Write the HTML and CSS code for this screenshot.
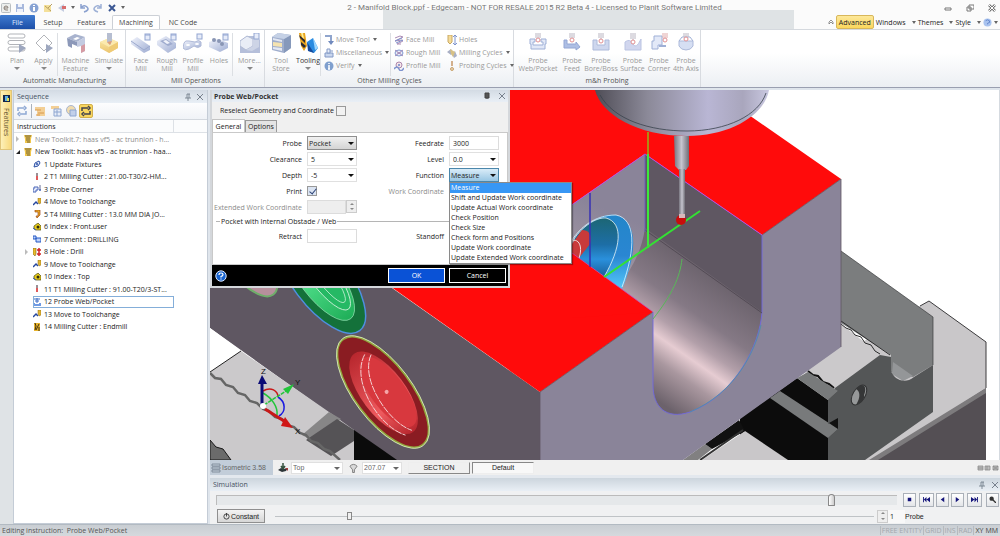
FILE: index.html
```html
<!DOCTYPE html>
<html lang="en">
<head>
<meta charset="utf-8">
<title>2 - Manifold Block.ppf - Edgecam</title>
<link rel="stylesheet" href="styles.css">
</head>
<body>
<svg class="sprite" aria-hidden="true">
  <defs>
    <linearGradient id="gSteel" x1="0" y1="0" x2="1" y2="1"><stop offset="0" stop-color="#eef1fb"/><stop offset="1" stop-color="#8e9fcb"/></linearGradient>
    <linearGradient id="gGold" x1="0" y1="0" x2="0" y2="1"><stop offset="0" stop-color="#fbeaa0"/><stop offset="1" stop-color="#e9ba55"/></linearGradient>
  </defs>
  <symbol id="i-plan" viewBox="0 0 20 20"><g fill="#fff" stroke="#a5a8ad"><rect x="1" y="1" width="17" height="4" rx="2"/><rect x="1" y="7.500" width="17" height="4" rx="2"/><rect x="1" y="14" width="17" height="4" rx="2"/></g><path d="M12 11l7 4-7 5z" fill="#8d98b5"/></symbol>
  <symbol id="i-apply" viewBox="0 0 20 20"><path d="M10 2l8 8-8 8-8-8z" fill="#fff" stroke="#a5a8ad"/><path d="M12 11l7 4-7 5z" fill="#8d98b5"/></symbol>
  <symbol id="i-machfeat" viewBox="0 0 20 20"><path d="M1 5l8-4 10 3-8 5z" fill="#9aa6c6"/><path d="M1 5l10 4v4L6 11v4l-4-2z" fill="#7887ad"/><path d="M11 9l8-5v14l-4 2v-7l-4 1z" fill="#b9c2dc"/><path d="M15 13l4-2v7l-4 2z" fill="#cf8a94"/><path d="M7 6l4-2 3 1-4 2z" fill="#fff"/></symbol>
  <symbol id="i-simulate" viewBox="0 0 20 20"><path d="M1 9l9-4 9 4v6l-9 5-9-5z" fill="url(#gGold)"/><path d="M1 9l9 5 9-5-9-4z" fill="#fbe6a0"/><path d="M10 14v6l9-5V9z" fill="#edc35d"/><path d="M8 0h5v8l-2 4-3-3z" fill="#aab3ca"/><path d="M8 9l3 3 2-4z" fill="#d98e60"/></symbol>
  <symbol id="i-face" viewBox="0 0 20 20"><path d="M0 8l6-4 13 9v4l-6 3L0 11z" fill="url(#gSteel)"/><path d="M0 8l13 9 6-4" fill="none" stroke="#8a9ac5"/><rect x="14" y="1" width="5" height="6" fill="#e3e9f8" stroke="#8197c9"/><path d="M14 2h5" stroke="#8197c9"/></symbol>
  <symbol id="i-rough" viewBox="0 0 20 20"><path d="M0 8l9-5 10 7v5l-8 5L0 12z" fill="url(#gSteel)"/><path d="M3 8l6-2 7 5-5 2z" fill="#8e9dc6"/><path d="M6 8l3-1 4 3-3 1z" fill="#eef1fb"/><rect x="14" y="1" width="5" height="6" fill="#e3e9f8" stroke="#8197c9"/><path d="M14 2h5" stroke="#8197c9"/></symbol>
  <symbol id="i-profile" viewBox="0 0 20 20"><path d="M1 10q1-3 5-2l6 1q4-3 6 0v4q-3 3-7 0l-5 3q-4 2-6-1z" fill="url(#gSteel)" stroke="#a3afd2"/><ellipse cx="5" cy="12" rx="2" ry="1" fill="#fff"/><ellipse cx="14" cy="11" rx="2" ry="1" fill="#fff"/><rect x="14" y="1" width="5" height="5" fill="#e3e9f8" stroke="#8197c9"/></symbol>
  <symbol id="i-holes" viewBox="0 0 20 20"><path d="M0 9l9-3 10 4v5l-8 4-11-5z" fill="url(#gSteel)"/><g fill="#7584a8"><circle cx="5" cy="7" r="2"/><circle cx="10" cy="8" r="2"/><circle cx="13" cy="11" r="2"/></g><rect x="14" y="1" width="5" height="6" fill="#e3e9f8" stroke="#8197c9"/><path d="M14 2h5" stroke="#8197c9"/></symbol>
  <symbol id="i-more" viewBox="0 0 20 20"><path d="M0 8l7-5h10l3 4v13H0z" fill="#a9b5d4"/><path d="M0 8l7-5 6 3v7l-7 4-6-4z" fill="#e6eaf5" stroke="#a4afcd"/><path d="M13 6h6v8l-7 4-6-1 7-4z" fill="#c5cde2"/><rect x="14" y="0" width="5" height="6" fill="#e3e9f8" stroke="#8197c9"/></symbol>
  <symbol id="i-store" viewBox="0 0 20 20"><path d="M1 4l6-4 13 2v13l-7 5-12-3z" fill="#8fa0c4"/><path d="M13 6l7-4v13l-7 5z" fill="#7288b0"/><path d="M1 4l12 2 7-4-13-2z" fill="#bccae2"/><path d="M2 9l9 1v4l-9-1z" fill="#f3dfa4"/><path d="M2 14l9 1v3l-9-2z" fill="#dfe5f2"/><path d="M2 5l9 2v2l-9-2z" fill="#dfe5f2"/></symbol>
  <symbol id="i-tooling" viewBox="0 0 20 20"><path d="M1 0h6l2 13-3 5-3-5z" fill="#e9a41c"/><path d="M1 2l6 5v3L2 5zM3 9l5 4-2 2-3-3z" fill="#2c2b33"/><path d="M3 0h2l1 6-2-2z" fill="#fff09b"/><path d="M9 9l6-4 5 10-4 5-5-2z" fill="#2a8be0"/><path d="M9 9l7 11-6-2z" fill="#174a9a"/><path d="M15 5l5 10-3 2z" fill="#9fd7ff"/></symbol>
  <symbol id="i-movetool" viewBox="0 0 10 10"><path d="M1 1h6v6" fill="none" stroke="#90a5cd" stroke-width="2"/><path d="M4 6h6l-3 4z" fill="#7089bd"/></symbol>
  <symbol id="i-misc" viewBox="0 0 10 10"><path d="M1 5h8v4H1z" fill="#c9d6ed" stroke="#8299c6"/><path d="M3 1h3v4H3zM6 3h3" fill="#e7edf8" stroke="#8299c6"/></symbol>
  <symbol id="i-info" viewBox="0 0 10 10"><circle cx="5" cy="5" r="4.500" fill="#7f9fce"/><path d="M5 2v1M5 4v4M4 8h2" stroke="#fff" stroke-width="1.500"/></symbol>
  <symbol id="i-fm" viewBox="0 0 10 10"><path d="M1 3l5-2 3 1-6 3-2 1 7-1 1 1-6 3h4" fill="none" stroke="#ac8cb4"/><path d="M1 6l7-3M2 8l7-3" stroke="#7e93ce"/></symbol>
  <symbol id="i-rm" viewBox="0 0 10 10"><ellipse cx="5" cy="5" rx="4" ry="3" fill="#e9eefa" stroke="#8298cf"/><path d="M1 2l8 6M1 8l8-6M3 5h4" stroke="#a78db8"/></symbol>
  <symbol id="i-pm" viewBox="0 0 10 10"><circle cx="5" cy="4" r="3" fill="#f5e5ea" stroke="#ad88ac"/><path d="M0 8q3-4 5 0t5-1" fill="none" stroke="#7e93ce" stroke-width="1.500"/><circle cx="5" cy="4" r="1" fill="#6d85c6"/></symbol>
  <symbol id="i-hl" viewBox="0 0 10 10"><path d="M1 0h4v7L3 9 1 7z" fill="#f5dc9a" stroke="#c9a862"/><path d="M8 0v10M6 2l2-2 2 2M6 8l2 2 2-2" fill="none" stroke="#7f94cc"/></symbol>
  <symbol id="i-mc" viewBox="0 0 10 10"><path d="M0 4l4-3 2 3-2 3zM5 6l3-3 2 5-3 2z" fill="#a9b0c5"/><path d="M3 1l5 3-2 5-2-3z" fill="#d8c184"/></symbol>
  <symbol id="i-pc" viewBox="0 0 10 10"><path d="M4 0h2v5H4z" fill="#d3b08d"/><circle cx="5" cy="8" r="1.500" fill="#e6d0b2" stroke="#c9a46f"/></symbol>
  <symbol id="i-pweb" viewBox="0 0 18 18"><path d="M1 6h5v3H4v3h10V9h-2V6h5v5h-1v5H2v-5H1z" fill="#dde5f6" stroke="#8fa3d0"/><path d="M9 0v6M7 0v5M11 0v5" stroke="#b0aab8"/><circle cx="9" cy="7" r="2" fill="#fff" stroke="#dc7c80"/></symbol>
  <symbol id="i-pfeed" viewBox="0 0 18 18"><path d="M1 7h3v4h9V9l4 5-4 3v-2H1z" fill="#9fb3e0" stroke="#8298ce"/><path d="M9 0v6M7 0v5M11 0v5" stroke="#b0aab8"/><circle cx="9" cy="7" r="2" fill="#fff" stroke="#dc7c80"/></symbol>
  <symbol id="i-pbore" viewBox="0 0 18 18"><path d="M1 7h4v5h8V7h4v10H1z" fill="#c6d1ec" stroke="#a0afd4"/><path d="M9 0v7M7 0v5M11 0v5" stroke="#b0aab8"/><circle cx="9" cy="8" r="2" fill="#fff" stroke="#dc7c80"/></symbol>
  <symbol id="i-psurf" viewBox="0 0 18 18"><path d="M1 9q5-4 8 2t8-5v11H1z" fill="#c9d0ec" stroke="#b0bade"/><path d="M9 0v8M7 0v6M11 0v6" stroke="#b0aab8"/><circle cx="9" cy="9" r="2" fill="#fff" stroke="#dc7c80"/></symbol>
  <symbol id="i-pcorner" viewBox="0 0 18 18"><path d="M4 3h8v9H8v4H2V8h2z" fill="#dfe6f7" stroke="#8fa3d0"/><path d="M15 0v8M13 0v5M17 0v5" stroke="#dc9c9c"/><circle cx="15" cy="7" r="2" fill="#fff" stroke="#dc7c80"/><path d="M9 13h7" stroke="#8fa3d0" stroke-width="2"/></symbol>
  <symbol id="i-paxis" viewBox="0 0 18 18"><path d="M2 8h14v5q-2 4-7 4t-7-4z" fill="#cfdaf2" stroke="#a0afd4"/><path d="M2 8l3-4h8l3 4" fill="none" stroke="#8fa3d0"/><path d="M9 0v5M7 0v4M11 0v4" stroke="#b0aab8"/><circle cx="9" cy="6" r="2" fill="#fff" stroke="#dc7c80"/></symbol>
  <symbol id="i-refresh" viewBox="0 0 12 12"><path d="M2 6V3h6M8 1l2 2-2 2M10 6v3H4M4 7L2 9l2 2" fill="none" stroke="currentColor" stroke-width="1.500"/></symbol>
  <symbol id="i-kit" viewBox="0 0 8 8"><path d="M0 0h8l-1 4v4H1V4z" fill="#f0c64c"/><path d="M1 1h6M2 3h4M2 5h4M3 7h3" stroke="#4e4630" stroke-width=".8"/></symbol>
  <symbol id="i-fix" viewBox="0 0 8 8"><path d="M1 7l1-4 4-2 1 2-2 3z" fill="#dfe7fa" stroke="#2d51a5"/><circle cx="4" cy="4" r="1" fill="#2d51a5"/></symbol>
  <symbol id="i-cut" viewBox="0 0 8 8"><path d="M4 0v4" stroke="#7a6a72" stroke-width="1.500"/><path d="M4 3v4" stroke="#e05a5a" stroke-width="2"/></symbol>
  <symbol id="i-corner" viewBox="0 0 8 8"><path d="M1 2h4v3H3v2H0V4h1z" fill="#e4eafb" stroke="#4a67b8"/><path d="M7 0v5" stroke="#666c96"/><circle cx="7" cy="5" r="1" fill="#4a67b8"/></symbol>
  <symbol id="i-move" viewBox="0 0 8 8"><path d="M0 7l3-3 2 2" fill="none" stroke="#26479e" stroke-width="1.500"/><path d="M5 0h3v5L6 6 5 4z" fill="#e4b531" stroke="#8a6a1a" stroke-width=".5"/></symbol>
  <symbol id="i-t4" viewBox="0 0 8 8"><path d="M2 0h5v5L4 8 3 6h2V2H2z" fill="#e8ad26" stroke="#a24a1b" stroke-width=".7"/></symbol>
  <symbol id="i-index" viewBox="0 0 8 8"><path d="M1 6V3l4-3 3 3v4H3z" fill="#e7cb1b" stroke="#4c470f" stroke-width=".7"/><circle cx="5" cy="4" r="1.500" fill="#2f2c0e"/><path d="M0 5l3 2" stroke="#375bb0"/></symbol>
  <symbol id="i-comment" viewBox="0 0 8 8"><path d="M0 1h3v3H0zM3 3h5v4H3z" fill="#bcd2fa" stroke="#2459c4"/></symbol>
  <symbol id="i-drill" viewBox="0 0 8 8"><path d="M0 0h3v6L2 8 0 6z" fill="#e8bd2c" stroke="#80611a" stroke-width=".6"/><path d="M6 0v8M4 2h4M4 6h4" stroke="#cf2326" stroke-width="1.500"/></symbol>
  <symbol id="i-probe" viewBox="0 0 8 8"><path d="M0 5h2v1h4V5h2v3H0z" fill="#6f9be4"/><path d="M1 1h6M4 0v5M2 3h4" stroke="#3d6cc5"/></symbol>
  <symbol id="i-end" viewBox="0 0 8 8"><path d="M1 0h6v8H1z" fill="#e8b42d"/><path d="M2 0l1 3-1 4M6 1L3 7M6 4v4" stroke="#3f3012" fill="none"/></symbol>
  <symbol id="i-pin" viewBox="0 0 8 8"><path d="M3 1v4M5 1v4M3 1h3M1 5h6M4 5v3" fill="none" stroke="#6b7684" stroke-width=".8"/></symbol>
  <symbol id="i-x" viewBox="0 0 8 8"><path d="M1 1l6 6M7 1L1 7" stroke="currentColor"/></symbol>
</svg>

<div class="app">
  <header class="top">
    <div class="titlebar">
      <div class="quick">
        <svg class="q-logo" viewBox="0 0 10 10"><rect x=".5" y=".5" width="9" height="9" rx="1" fill="#eceeed" stroke="#b9bec1"/><path d="M3 5h4q0-2-2-2T3 5t2 2h2" fill="none" stroke="#8a8078"/></svg>
        <svg viewBox="0 0 10 10"><path d="M1 1h8v8H1z" fill="#a7b8dc"/><path d="M3 1h4v3H3zM2 6h6v3H2z" fill="#eef2fb"/></svg>
        <svg viewBox="0 0 10 10"><circle cx="5" cy="5" r="4.500" fill="#86a2d3"/><path d="M5 2v1M5 4v4" stroke="#fff" stroke-width="2"/></svg>
        <svg viewBox="0 0 10 10"><path d="M1 2h7v7H1z" fill="#f4e09a"/><path d="M2 3l6 5M9 1L5 5" stroke="#b79f62"/></svg>
        <svg viewBox="0 0 10 10"><path d="M1 5l6-4v8z" fill="#c4cce0"/><path d="M5 3h4v3H5z" fill="#d86d6d"/></svg>
        <i class="caret"></i>
        <svg viewBox="0 0 10 10"><path d="M2 1v4h4M2 5q3-4 6-1t-3 5" fill="none" stroke="#8ba1cf" stroke-width="1.500"/></svg>
        <svg viewBox="0 0 10 10"><path d="M8 1v4H4M8 5q-3-4-6-1t3 5" fill="none" stroke="#9eb1d6" stroke-width="1.500"/></svg>
        <svg viewBox="0 0 10 10"><path d="M2 2l6 6M8 2L2 8" stroke="#3b5793" stroke-width="2"/></svg>
        <i class="caret"></i>
      </div>
      <h1 class="title">2 - Manifold Block.ppf - Edgecam - NOT FOR RESALE 2015 R2 Beta 4 - Licensed to Planit Software Limited</h1>
      <div class="winbtns">
        <button aria-label="Minimize"><svg viewBox="0 0 8 8"><path d="M1 4h6v2H1z" fill="#fff" stroke="#777"/></svg></button>
        <button aria-label="Restore"><svg viewBox="0 0 8 8"><path d="M3 1h5v4H3zM1 3h4v4H1z" fill="#fff" stroke="#777"/></svg></button>
        <button aria-label="Close"><svg viewBox="0 0 8 8"><path d="M1 1l6 6M7 1L1 7" stroke="#777" stroke-width="2.500"/><path d="M1 1l6 6M7 1L1 7" stroke="#fff"/></svg></button>
      </div>
    </div>
    <nav class="tabs">
      <button class="tab file">File</button>
      <button class="tab setup">Setup</button>
      <button class="tab feat">Features</button>
      <button class="tab on">Machining</button>
      <button class="tab nc">NC Code</button>
      <div class="menus">
        <svg class="chev" viewBox="0 0 6 6"><path d="M1 3l2-2 2 2v2L3 3 1 5z" fill="#fff" stroke="#666" stroke-width=".7"/></svg>
        <button class="adv">Advanced</button>
        <button class="menu">Windows<i class="caret"></i></button>
        <button class="menu">Themes<i class="caret"></i></button>
        <button class="menu">Style<i class="caret"></i></button>
        <svg class="help" viewBox="0 0 10 10"><circle cx="5" cy="5" r="4.500" fill="#a9c3ef"/><path d="M3 3q2-2 4 0t-2 3v1" fill="none" stroke="#5c80c8"/></svg>
        <i class="caret"></i>
      </div>
    </nav>
  </header>

  <section class="ribbon">
    <div class="group g-auto">
      <div class="items">
        <button class="big"><svg><use href="#i-plan"/></svg><span>Plan</span><i class="caret"></i></button>
        <button class="big"><svg><use href="#i-apply"/></svg><span>Apply</span><i class="caret"></i></button>
        <button class="big sep"><svg><use href="#i-machfeat"/></svg><span>Machine<br>Feature</span></button>
        <button class="big"><svg><use href="#i-simulate"/></svg><span>Simulate</span><i class="caret"></i></button>
      </div>
      <h2>Automatic Manufacturing</h2>
    </div>
    <div class="group g-mill">
      <div class="items">
        <button class="big"><svg><use href="#i-face"/></svg><span>Face<br>Mill</span></button>
        <button class="big"><svg><use href="#i-rough"/></svg><span>Rough<br>Mill</span></button>
        <button class="big"><svg><use href="#i-profile"/></svg><span>Profile<br>Mill</span></button>
        <button class="big"><svg><use href="#i-holes"/></svg><span>Holes</span></button>
        <button class="big sep"><svg><use href="#i-more"/></svg><span>More...</span><i class="caret"></i></button>
      </div>
      <h2>Mill Operations</h2>
    </div>
    <div class="group g-other">
      <div class="items">
        <button class="big"><svg><use href="#i-store"/></svg><span>Tool<br>Store</span></button>
        <button class="big live"><svg><use href="#i-tooling"/></svg><span>Tooling</span><i class="caret"></i></button>
        <div class="smalls sep">
          <button><svg><use href="#i-movetool"/></svg>Move Tool<i class="caret"></i></button>
          <button><svg><use href="#i-misc"/></svg>Miscellaneous<i class="caret"></i></button>
          <button><svg><use href="#i-info"/></svg>Verify<i class="caret"></i></button>
        </div>
        <div class="smalls sep">
          <button><svg><use href="#i-fm"/></svg>Face Mill</button>
          <button><svg><use href="#i-rm"/></svg>Rough Mill</button>
          <button><svg><use href="#i-pm"/></svg>Profile Mill</button>
        </div>
        <div class="smalls">
          <button><svg><use href="#i-hl"/></svg>Holes</button>
          <button><svg><use href="#i-mc"/></svg>Milling Cycles<i class="caret"></i></button>
          <button><svg><use href="#i-pc"/></svg>Probing Cycles<i class="caret"></i></button>
        </div>
      </div>
      <h2 class="other-h">Other Milling Cycles</h2>
    </div>
    <div class="group g-probe">
      <div class="items">
        <button class="big pr"><svg><use href="#i-pweb"/></svg><span>Probe<br>Web/Pocket</span></button>
        <button class="big pr"><svg><use href="#i-pfeed"/></svg><span>Probe<br>Feed</span></button>
        <button class="big pr"><svg><use href="#i-pbore"/></svg><span>Probe<br>Bore/Boss</span></button>
        <button class="big pr"><svg><use href="#i-psurf"/></svg><span>Probe<br>Surface</span></button>
        <button class="big pr"><svg><use href="#i-pcorner"/></svg><span>Probe<br>Corner</span></button>
        <button class="big pr"><svg><use href="#i-paxis"/></svg><span>Probe<br>4th Axis</span></button>
      </div>
      <h2>m&amp;h Probing</h2>
    </div>
  </section>

  <main class="main">
    <aside class="rail">
      <button class="railtab"><svg viewBox="0 0 8 8"><rect x="1" y="1" width="7" height="7" fill="#15264a"/><path d="M3 2h3v5H3z" fill="#5eb0e6"/><path d="M5 4h2v3H5z" fill="#dfe25a"/></svg><span>Features</span></button>
    </aside>

    <section class="seq">
      <header class="panelhead"><h2>Sequence</h2><svg><use href="#i-pin"/></svg><svg class="x"><use href="#i-x"/></svg></header>
      <div class="seqtools">
        <button aria-label="Refresh" class="t-blue"><svg><use href="#i-refresh"/></svg></button>
        <button aria-label="New folder" class="sep"><svg viewBox="0 0 12 12"><path d="M1 2h10v3H1zM3 5h8v6H3z" fill="#f3cf95"/><path d="M1 5h6M4 8h6M2 10h4" stroke="#d99a4c"/></svg></button>
        <button aria-label="List"><svg viewBox="0 0 12 12"><path d="M1 1h8v3H1z" fill="#f3cf95"/><path d="M4 4h7v7H4z" fill="#e7edf8" stroke="#8ea6d0"/><path d="M4 7h7M7 5v6" stroke="#8ea6d0"/></svg></button>
        <button aria-label="Stock"><svg viewBox="0 0 12 12"><circle cx="6" cy="5" r="4.500" fill="#f1dcae" stroke="#a9b6d0"/><path d="M5 5h6v6H5z" fill="#c2d0ea" stroke="#8ea6d0"/></svg></button>
        <button aria-label="Auto regenerate" class="active"><svg><use href="#i-refresh"/></svg></button>
      </div>
      <div class="colhead"><span>Instructions</span></div>
      <ul class="tree" role="tree">
        <li role="treeitem" class="root dim"><i class="tw closed"></i><svg><use href="#i-kit"/></svg><span>New Toolkit.7: haas vf5 - ac trunnion - h...</span></li>
        <li role="treeitem" class="root"><i class="tw open"></i><svg><use href="#i-kit"/></svg><span>New Toolkit: haas vf5 - ac trunnion - haa...</span></li>
        <li role="treeitem"><i class="tw"></i><svg><use href="#i-fix"/></svg><span>1 Update Fixtures</span></li>
        <li role="treeitem"><i class="tw"></i><svg><use href="#i-cut"/></svg><span>2 T1 Milling Cutter : 21.00-T30/2-HM...</span></li>
        <li role="treeitem"><i class="tw"></i><svg><use href="#i-corner"/></svg><span>3 Probe Corner</span></li>
        <li role="treeitem"><i class="tw"></i><svg><use href="#i-move"/></svg><span>4 Move to Toolchange</span></li>
        <li role="treeitem"><i class="tw"></i><svg><use href="#i-t4"/></svg><span>5 T4 Milling Cutter : 13.0 MM DIA JO...</span></li>
        <li role="treeitem"><i class="tw"></i><svg><use href="#i-index"/></svg><span>6 Index : Front.user</span></li>
        <li role="treeitem"><i class="tw"></i><svg><use href="#i-comment"/></svg><span>7 Comment : DRILLING</span></li>
        <li role="treeitem"><i class="tw closed"></i><svg><use href="#i-drill"/></svg><span>8 Hole : Drill</span></li>
        <li role="treeitem"><i class="tw"></i><svg><use href="#i-move"/></svg><span>9 Move to Toolchange</span></li>
        <li role="treeitem"><i class="tw"></i><svg><use href="#i-index"/></svg><span>10 Index : Top</span></li>
        <li role="treeitem"><i class="tw"></i><svg><use href="#i-cut"/></svg><span>11 T1 Milling Cutter : 91.00-T20/3-ST...</span></li>
        <li role="treeitem" class="sel" aria-selected="true"><i class="tw"></i><div class="pick"><svg><use href="#i-probe"/></svg><span>12 Probe Web/Pocket</span></div></li>
        <li role="treeitem"><i class="tw"></i><svg><use href="#i-move"/></svg><span>13 Move to Toolchange</span></li>
        <li role="treeitem"><i class="tw"></i><svg><use href="#i-end"/></svg><span>14 Milling Cutter : Endmill</span></li>
      </ul>
    </section>

    <section class="work">
      <div class="view">
        <svg class="scene" viewBox="210 90 790 370" preserveAspectRatio="xMinYMin slice" role="img" aria-label="Manifold block in machine">
          <defs>
            <linearGradient id="cyl" gradientUnits="userSpaceOnUse" x1="645" y1="230" x2="569" y2="339">
              <stop offset="0" stop-color="#6d646e"/><stop offset=".3" stop-color="#857985"/><stop offset=".48" stop-color="#b29fa9"/><stop offset=".6" stop-color="#e6ccd2"/><stop offset=".75" stop-color="#a9979f"/><stop offset="1" stop-color="#6c626b"/>
            </linearGradient>
            <linearGradient id="spin" x1="0" x2="1"><stop offset="0" stop-color="#4f4d56"/><stop offset=".3" stop-color="#8b8998"/><stop offset=".65" stop-color="#b9b6d4"/><stop offset=".85" stop-color="#a9a6bd"/><stop offset="1" stop-color="#c9c8e0"/></linearGradient>
            <linearGradient id="rod" x1="0" x2="1"><stop offset="0" stop-color="#77757f"/><stop offset=".5" stop-color="#c6c5cf"/><stop offset="1" stop-color="#6f6d76"/></linearGradient>
            <linearGradient id="redIn" x1="0" y1="0" x2="1" y2="0"><stop offset="0" stop-color="#b8272e"/><stop offset=".65" stop-color="#ee5a5e"/><stop offset="1" stop-color="#b8272e"/></linearGradient>
            <linearGradient id="grnIn" x1="0" y1="0" x2="1" y2="0"><stop offset="0" stop-color="#1f8a4a"/><stop offset=".5" stop-color="#49d883"/><stop offset="1" stop-color="#1fae58"/></linearGradient>
            <linearGradient id="bluIn" x1="0" y1="0" x2="0" y2="1"><stop offset="0" stop-color="#1c6674"/><stop offset=".45" stop-color="#1d6ea6"/><stop offset=".7" stop-color="#2a90dc"/><stop offset="1" stop-color="#1a5f98"/></linearGradient>
            <linearGradient id="bluOut" x1="0" y1="0" x2="0" y2="1"><stop offset="0" stop-color="#2386ca"/><stop offset=".55" stop-color="#2a86d2"/><stop offset="1" stop-color="#53c8fa"/></linearGradient>
            <linearGradient id="wall" gradientUnits="userSpaceOnUse" x1="645" y1="225" x2="618" y2="290"><stop offset="0" stop-color="#8a8499"/><stop offset=".6" stop-color="#9a909f"/><stop offset="1" stop-color="#c4b1b9"/></linearGradient>
          </defs>
          <rect x="210" y="90" width="790" height="370" fill="#fff"/>
          <!-- machine table, right -->
          <path d="M920 306l9-5 57 41v46l-104 72h-80V380z" fill="#c9c7c9"/>
          <path d="M920 306l9-5 57 41v46" fill="none" stroke="#3c3b3d"/>
          <path d="M986 388v72H876z" fill="#544f54"/><path d="M869 460l117-72v5l-108 67z" fill="#7d7b7d"/>
          <path d="M841 251l92 66v48l-20 12-22-5v-17l-50-32z" fill="#7b7d7e"/>
          <path d="M841 251l92 66v48" fill="none" stroke="#3b3c3d" stroke-width=".7"/>
          <path d="M893 362l20 14-10 5-11-7z" fill="#949698"/>
          <path d="M800 380l41-56 40 31-46 34z" fill="#cbc9cb"/>
          <path d="M835 388l45-33 11 2v14c3 8 13 14 23 6l19-12v47l-68 48h-37v-60z" fill="#545657"/>
          <path d="M841 324l5 4 5 2 4 5 6 2 4 6 6 2 4 6 5 3M841 321l49 34" fill="none" stroke="#2c2c2d"/>
          <path d="M740 418l57-40 31 22v60h-88z" fill="#0c0c0c"/>
          <path d="M808 371l5 4 5 1 5 6 6 2 5 4" fill="none" stroke="#111" stroke-width="2"/>
          <path d="M797 378l11-6 30 19-10 9z" fill="#787a7b"/><path d="M770 398l10-7 58 38-10 9z" fill="#787a7b"/>
          <path d="M828 400l10-9v28l-10 5zM828 438l10-9v31h-10z" fill="#545657"/><path d="M838 418v11l-9-6z" fill="#111"/>
          <ellipse cx="859" cy="395" rx="6" ry="11" transform="rotate(32 859 395)" fill="#969899" stroke="#303132"/>
          <path d="M856 389c6-8 12-3 8 6 1 6-4 8-8 10 5-8 4-14 0-16z" fill="#353637"/>
          <path d="M745 431l43 29h-86z" fill="#c9c7c9"/><path d="M683 460l22-16 7 5-14 11z" fill="#818081"/><path d="M705 444l34-24 6 11-33 18z" fill="#111"/><path d="M700 460l43-30" stroke="#333" stroke-width="2"/>
          <!-- block -->
          <path d="M540 392L653 312 762 235l79-56v168L683 460H540z" fill="#8a8499"/>
          <path d="M210 160L392 288 540 392v68H395L210 328z" fill="#5f5762"/>
          <path d="M112 90h601l128 89-79 56-117-81-85 59 12 43 81 56-113 80z" fill="#ff0b0b"/>
          <path d="M841 179v168M540 392v68M841 179l-79 56M653 312L540 392" fill="none" stroke="#5f5762" stroke-width=".8"/>
          <!-- slot -->
          <path d="M645 154L560 213v34l85 59h8L645 232z" fill="url(#wall)"/>
          <path d="M645 154l117 81v78l-117-81z" fill="#5f5762"/>
          <path d="M645 228L762 312C760 345 735 395 690 412 666 420 653 407 653 385V312L617 287C632 270 642 250 645 228z" fill="url(#cyl)"/>
          <path d="M762 235v77C760 345 735 395 690 412 666 420 653 407 653 385V312" fill="none" stroke="#7168e0" stroke-width=".9"/>
          <path d="M761 325C755 352 735 393 690 412" fill="none" stroke="#4890a8" stroke-width=".8"/>
          <path d="M645 230l117 83" stroke="#4c454f" stroke-width=".8"/>
          <path d="M762 235L645 154l-85 59" fill="none" stroke="#b94ae0"/>
          <path d="M574 239c10-16 32-28 45-23 19 8 18 38 3 73l-46-32z" fill="url(#bluOut)"/>
          <path d="M574 239c8-12 22-22 32-21 18 5 15 30-2 59l-28-20z" fill="url(#bluIn)" stroke="#e9f5f5" stroke-width=".8"/>
          <path d="M572 240c8-12 22-25 44-25 20 4 20 33 6 72" fill="none" stroke="#dff2ff" stroke-width=".8"/>
          <path d="M572 244l10-14c9 0 10 8 8 14l-11 14-7-2z" fill="#c93a3a"/><path d="M572 241c7-3 11 6 7 17" fill="none" stroke="#f0dcdc"/>
          <path d="M572 253l81 59-81 6z" fill="#ff0b0b"/>
          <path d="M653 312l-81-59" stroke="#c948c0" stroke-width=".7"/>
          <path d="M590 193v74" stroke="#3631b5" stroke-width="1.500"/><path d="M645 154v78" stroke="#6a61b8"/>
          <path d="M648 132v22" stroke="#b08a12" stroke-width="2"/><path d="M648 154v94" stroke="#3bea3b" stroke-width="2"/>
          <path d="M604 277l96-66" stroke="#33e233" stroke-width="2"/>
          <path d="M682 259c-2 18-10 36-29 60" fill="none" stroke="#58b858"/>
          <!-- spindle and probe -->
          <path d="M595 90c6 24 42 46 92 46 45 0 78-22 82-46z" fill="url(#spin)"/>
          <path d="M600 95c14 25 50 36 87 36 40 0 72-16 79-38" fill="none" stroke="#39424c" stroke-width=".8"/>
          <path d="M674 136h15v30l-3 4h-7l-4-4z" fill="url(#rod)"/><path d="M679 169h6v50h-6z" fill="url(#rod)"/>
          <circle cx="681" cy="220" r="5" fill="#c80d0d"/><path d="M679 214h6v4h-6z" fill="#d8b8bc"/>
          <!-- bores on the dark face -->
          <g transform="translate(320 278) rotate(53)"><ellipse rx="66" ry="28" fill="#14713a" stroke="#4f8fe0" stroke-width="1.500"/><ellipse rx="51" ry="20" fill="url(#grnIn)" stroke="#8fdcae" stroke-width=".7"/><ellipse rx="42" ry="13" cy="-4" fill="#25b964" stroke="#d5f3df" stroke-width=".8"/><ellipse rx="34" ry="8" cy="-5" fill="none" stroke="#d5f3df" stroke-width=".7"/></g>
          <g transform="translate(236 245) rotate(53)"><ellipse rx="62" ry="22" fill="#b78f9c" stroke="#6fae6a" stroke-width="2"/></g>
          <g transform="translate(383 392) rotate(53)"><ellipse rx="66" ry="28" fill="#8a1c22" stroke="#91a33c" stroke-width="2"/><ellipse rx="67" ry="29" fill="none" stroke="#dcefc2" stroke-width=".8"/><ellipse cx="1" rx="49" ry="22" fill="url(#redIn)"/><ellipse cx="3" cy="-4" rx="42" ry="17" fill="#d8383e"/><path d="M-41 -8C-28 20 26 24 48 8M-37 -13C-24 11 28 14 48 0" fill="none" stroke="#f4d2d4" stroke-width=".9" stroke-dasharray="7 1"/><circle cx="2" cy="-3" r="2" fill="#f4a6a8"/></g>
          <!-- table, left -->
          <path d="M210 328l31 23-31 21z" fill="#fff"/>
          <path d="M241 351l88 61 25 18v30H210v-88z" fill="#cbc9cb"/>
          <path d="M210 372l31-21" stroke="#222"/>
          <path d="M329 412l12 7-28 22-11-6z" fill="#878687"/><path d="M337 419l17 11v11l-23 15-25-16z" fill="#555356"/>
          <path d="M354 430v30h43z" fill="#0b0b0b"/>
          <path d="M210 373l5 5 6 1 5 6 7 2 5 6 7 2 5 6 7 2 6 6 6 2 6 6 7 2 5 6 7 2 6 6 6 2 5 6 7 2 6 6 6 2 10 9" fill="none" stroke="#666" stroke-width="2.500"/>
          <path d="M210 440l6 7 7 2 8 11h-21z" fill="#6b6b6b" stroke="#181818"/>
          <!-- axis triad -->
          <g fill="none" stroke-width="1.500"><path d="M263 391c8-5 15 0 15 6" stroke="#c81818"/><path d="M278 397c8 5 8 15 1 19" stroke="#1a1ae0"/><path d="M263 393c9 5 15 14 14 22" stroke="#22c53a"/><path d="M264 405l22-14" stroke="#22c53a" stroke-dasharray="4 1"/></g>
          <path d="M262 406v-23" stroke="#0b0b76" stroke-width="3"/><path d="M258 384l4-9 5 9z" fill="#0b0b76"/>
          <path d="M265 409l19 12" stroke="#c81818" stroke-width="3"/><path d="M285 417l8 11-12-2z" fill="#d01616"/><path d="M283 389l11-5-6 10z" fill="#22c53a"/>
          <circle cx="263" cy="406" r="3" fill="#fff"/>
          <text x="261" y="374" class="axis">Z</text><text x="295" y="385" class="axis">Y</text><text x="295" y="434" class="axis">X</text>
        </svg>

        <form class="dialog" onsubmit="return false">
          <header class="panelhead dlg"><h2>Probe Web/Pocket</h2><svg viewBox="0 0 8 8"><path d="M2 1h4v5H2zM4 6v1" fill="#555" stroke="#444"/></svg><svg class="x"><use href="#i-x"/></svg></header>
          <div class="reselect"><label for="resel">Reselect Geometry and Coordinate</label><input type="checkbox" id="resel"></div>
          <div class="dtabs"><button type="button" class="dtab on">General</button><button type="button" class="dtab">Options</button></div>
          <div class="dbody">
            <div class="fields">
              <label for="probe">Probe</label><span class="sel-wrap"><select id="probe" class="shade"><option>Pocket</option></select></span>
              <label for="feed">Feedrate</label><input id="feed" value="3000">
              <label for="clr">Clearance</label><span class="sel-wrap"><select id="clr"><option>5</option></select></span>
              <label for="lvl">Level</label><span class="sel-wrap"><select id="lvl"><option>0.0</option></select></span>
              <label for="dep">Depth</label><span class="sel-wrap"><select id="dep"><option>-5</option></select></span>
              <label for="fn">Function</label>
              <span class="sel-wrap"><select id="fn" class="blue"><option>Measure</option></select>
                <ul class="options" role="listbox" aria-label="Function">
                  <li role="option" aria-selected="true" class="hot">Measure</li>
                  <li role="option">Shift and Update Work coordinate</li>
                  <li role="option">Update Actual Work coordinate</li>
                  <li role="option">Check Position</li>
                  <li role="option">Check Size</li>
                  <li role="option">Check form and Positions</li>
                  <li role="option">Update Work coordinate</li>
                  <li role="option">Update Extended Work coordinate</li>
                </ul>
              </span>
              <label for="prt">Print</label><input type="checkbox" id="prt" checked>
              <label for="wc" class="off">Work Coordinate</label><input id="wc" disabled>
              <label for="ewc" class="off">Extended Work Coordinate</label><span class="spin-wrap"><input id="ewc" disabled><span class="spin"><i></i><i></i></span></span>
            </div>
            <h3 class="legend">Pocket with Internal Obstade / Web</h3>
            <div class="fields">
              <label for="ret">Retract</label><input id="ret">
              <label for="sto">Standoff</label><input id="sto">
            </div>
          </div>
          <footer class="dfoot">
            <svg viewBox="0 0 12 12"><circle cx="6" cy="6" r="5.200" fill="#1763cf" stroke="#dfeaff"/><path d="M4 5q0-2 2-2t2 1.500-2 2v1M6 8.500v1" fill="none" stroke="#fff" stroke-width="1.200"/></svg>
            <button class="ok">OK</button><button type="button" class="cancel">Cancel</button>
          </footer>
        </form>
      </div>

      <div class="viewbar">
        <button class="iso"><svg viewBox="0 0 10 10"><path d="M1 1h8v2H1zM1 4h8v2H1zM1 7h8v2H1z" fill="none" stroke="#75808f" stroke-width=".8"/></svg>Isometric 3.58</button>
        <svg class="cpl" viewBox="0 0 10 10"><path d="M0 7l3-2 3 1 4-1-2 3-4 1z" fill="#2c3538"/><path d="M5 0v5M3 3l2 3 2-3" stroke="#35503c" fill="none" stroke-width="1.500"/><path d="M7 5h3v3z" fill="#a53b3b"/></svg>
        <span class="sel-wrap top-sel"><select aria-label="Plane"><option>Top</option></select></span>
        <svg class="filt" viewBox="0 0 10 10"><path d="M1 3q4-4 8 0L6 7v3H4V7z" fill="#d9d9d9" stroke="#777"/></svg>
        <span class="sel-wrap lvl-sel"><select aria-label="Level"><option>207.07</option></select></span>
        <button class="vb raised">SECTION</button>
        <button class="vb sunk">Default</button>
        <svg class="vwin" viewBox="0 0 22 6"><g fill="#bdbdbd" stroke="#8a8a8a" stroke-width=".8"><path d="M1 1h5v4H1zM8 1h5v4H8zM16 1h5v4h-5z"/><path d="M1 3h5M10 1v4M16 1l5 4M21 1l-5 4"/></g></svg>
      </div>

      <section class="sim">
        <header class="panelhead"><h2>Simulation</h2><svg><use href="#i-pin"/></svg><svg class="x"><use href="#i-x"/></svg></header>
        <div class="simrow">
          <input type="range" class="timeline" aria-label="Simulation position" min="0" max="1000" value="908">
          <button class="pb" aria-label="Stop"><svg viewBox="0 0 8 8"><path d="M2 2h4v4H2z"/></svg></button>
          <button class="pb wide" aria-label="Start"><svg viewBox="0 0 8 8"><path d="M0 1h1v6H0zM4 1v6L1 4zM8 1v6L4 4z"/></svg></button>
          <button class="pb" aria-label="Back"><svg viewBox="0 0 8 8"><path d="M6 1v6L2 4z"/></svg></button>
          <button class="pb" aria-label="Play"><svg viewBox="0 0 8 8"><path d="M2 1v6l4-3z"/></svg></button>
          <button class="pb wide" aria-label="End"><svg viewBox="0 0 8 8"><path d="M7 1h1v6H7zM4 1v6l3-3zM0 1v6l4-3z"/></svg></button>
          <button class="pb gap" aria-label="Zoom"><svg viewBox="0 0 8 8"><circle cx="3" cy="3" r="2.500" fill="#333"/><path d="M4 4l4 4" stroke="#333" stroke-width="1.500"/></svg></button>
        </div>
        <div class="simrow two">
          <button class="const"><svg viewBox="0 0 8 8"><circle cx="4" cy="4" r="3" fill="none" stroke="#333"/><path d="M4 0v4" stroke="#333"/></svg>Constant</button>
          <input type="range" class="speed" aria-label="Speed" min="0" max="1000" value="121">
          <span class="spin"><i></i><i></i></span>
          <input class="step" aria-label="Step" value="1">
          <span class="plabel">Probe</span>
        </div>
      </section>
    </section>
  </main>

  <footer class="status">
    <span class="msg">Editing instruction:&nbsp; Probe Web/Pocket</span>
    <span class="fl">FREE ENTITY</span><span class="fl">GRID</span><span class="fl">INS</span><span class="fl">RAD</span><span class="fl dk">XY</span><span class="nb">MM</span>
  </footer>
</div>
</body>
</html>
```

FILE: styles.css
```css
* { box-sizing: border-box; margin: 0; padding: 0; }
html, body { height: 100%; }
body, button, input, select { font: 7px/9px "Open Sans", "Noto Sans", sans-serif; color: #222; }
button { background: none; border: 0; white-space: nowrap; }
h1, h2, h3 { font-size: 7px; font-weight: 400; }
ul { list-style: none; }
svg { flex: none; }
.sprite { position: absolute; width: 0; height: 0; }
.app { display: flex; flex-direction: column; height: 100vh; min-height: 536px; background: #eef0f2; }
.caret { display: inline-block; flex: none; border: 2px solid transparent; border-top: 3px solid #666; border-bottom: 0; }

/* title bar and tabs */
.top { background: linear-gradient(#dfe3e5, #dfe3e5) 383px 10px / 411px 19px no-repeat, #fbfbfb; }
.titlebar { display: flex; align-items: center; height: 15px; padding: 0 4px 0 1px; }
.quick { display: flex; align-items: center; gap: 4px; width: 124px; }
.quick svg { width: 10px; height: 10px; }
.title { flex: 1; text-align: center; color: #777; font-family: Roboto, sans-serif; font-size: 8px; white-space: nowrap; }
.winbtns { display: flex; gap: 14px; }
.winbtns button { width: 8px; height: 8px; }
.winbtns svg { display: block; width: 8px; height: 8px; }
.tabs { display: flex; height: 14px; }
.tab { color: #444; text-align: center; }
.tab.file { width: 35px; color: #dce8ff; background: linear-gradient(#3f7bd0, #1c4fa8); border-radius: 1px 1px 0 0; }
.tab.setup { width: 36px; }
.tab.feat { width: 41px; }
.tab.nc { width: 46px; }
.tab.on { width: 48px; background: #fff; border: 1px solid #ccd0d6; border-bottom: 0; border-radius: 2px 2px 0 0; }
.menus { display: flex; align-items: center; margin-left: auto; padding-right: 2px; gap: 2px; }
.menu { display: flex; align-items: center; gap: 6px; }
.menus svg.chev { width: 6px; height: 6px; }
.adv { height: 14px; width: 38px; text-align: center; background: linear-gradient(#fde89a, #fbd75c); border: 1px solid #d8b75a; border-radius: 2px; }
.help { width: 9px; height: 9px; }

/* ribbon */
.ribbon { display: flex; height: 59px; background: linear-gradient(#fff 40%, #eceff3); border-top: 1px solid #d5d9de; border-bottom: 1px solid #9a9fb0; }
.group { display: flex; flex-direction: column; justify-content: space-between; border-right: 1px solid #d8dbe0; padding: 3px 0 2px; }
.group h2 { text-align: center; color: #555; }
.items { display: grid; height: 43px; }
.g-auto { width: 126px; padding-left: 4px; }
.g-auto .items { grid-template-columns: 26px 27px 36px 32px; }
.g-mill { width: 139px; padding-left: 2px; }
.g-mill .items { grid-template-columns: 26px 26px 26px 26px 34px; }
.g-other { width: 249px; padding-left: 1px; }
.g-other .items { grid-template-columns: 30px 24px 70px 54px 70px; }
.g-probe { width: 187px; }
.g-probe .items { grid-template-columns: 48px 20px 38px 25px 28px 26px; justify-items: center; }
.big { display: flex; flex-direction: column; align-items: center; color: #999; line-height: 8px; }
.big svg { width: 20px; height: 20px; margin-bottom: 4px; opacity: .85; }
.big.pr svg { width: 18px; height: 18px; margin-bottom: 6px; }
.big .caret { border-width: 3px 3px 0; margin-top: 2px; border-top-color: #888; }
.big.live { color: #333; }
.big.live svg { opacity: 1; }
.sep { border-left: 1px solid #dcdfe3; }
.smalls { display: grid; grid-template-rows: 13px 13px 13px; padding-left: 3px; }
.smalls button { display: flex; align-items: center; gap: 2px; color: #999; }
.smalls svg { width: 10px; height: 10px; }
.smalls .caret { margin-left: 1px; }
.group h2.other-h { padding-right: 0; }

/* main split */
.main { display: flex; flex: 1; min-height: 0; background: #dfe5ec; padding-top: 2px; }
.rail { width: 13px; background: #dfe3e6; }
.railtab { display: flex; flex-direction: column; align-items: center; gap: 6px; width: 12px; height: 60px; padding-top: 3px; background: linear-gradient(90deg, #fdf0b8, #f8d97c); border: 1px solid #e0c57a; }
.railtab svg { width: 8px; height: 8px; }
.railtab span { writing-mode: vertical-rl; line-height: 10px; color: #5f5233; }
.panelhead { display: flex; align-items: center; gap: 4px; height: 13px; padding: 0 3px; background: linear-gradient(#d3dbe4, #e9eff6); }
.panelhead h2 { flex: 1; color: #44505e; }
.panelhead svg { width: 8px; height: 8px; color: #78818d; }
.seq { display: flex; flex-direction: column; width: 195px; margin-right: 2px; border: 1px solid #c4ccd6; border-top: 0; background: #fff; }
.seqtools { display: flex; align-items: center; gap: 1px; height: 16px; padding-left: 1px; background: linear-gradient(#fdfdfe, #f0f3f7); }
.seqtools button { display: grid; place-items: center; width: 14px; height: 14px; }
.seqtools svg { width: 12px; height: 12px; }
.seqtools .t-blue { color: #8fa9d4; }
.seqtools .sep { width: 17px; border-left: 1px solid #aab2bc; margin-left: 1px; }
.seqtools .active { background: #f9d65e; border: 1px solid #d2b04d; color: #44444c; border-radius: 2px; }
.colhead { display: flex; height: 14px; border-top: 1px solid #d3d8de; border-bottom: 1px solid #dde1e6; background: #fbfcfd; }
.colhead span { width: 160px; padding: 2px 3px; border-right: 1px solid #dde1e6; }
.tree { display: grid; grid-auto-rows: 1fr; height: 200px; padding-left: 11px; }
.tree li { display: flex; align-items: center; gap: 3px; white-space: nowrap; }
.tree li.root { margin-left: -9px; }
.tree svg { width: 8px; height: 8px; }
.tree .dim { color: #8c8c8c; }
.tw { width: 5px; height: 5px; flex: none; }
.tw.closed { border: 3px solid transparent; border-left: 3px solid #bbb; border-right: 0; width: 3px; height: 6px; margin-right: 2px; }
.tw.open { border: 2px solid transparent; border-right-color: #222; border-bottom-color: #222; width: 4px; height: 4px; margin-right: 1px; }
.pick { display: flex; align-items: center; gap: 3px; width: 141px; height: 12px; outline: 1px solid #84aed9; outline-offset: -1px; }

/* viewport */
.work { display: flex; flex-direction: column; flex: 1; min-width: 0; }
.view { position: relative; flex: 1; min-height: 0; border-right: 1px solid #d5dae0; }
.scene { display: block; width: 100%; height: 100%; }
.axis { font: 8px "Liberation Sans", sans-serif; fill: #111; }

/* dialog */
.dialog { position: absolute; left: 0; top: 0; width: 300px; background: #f0f0f0; border: 2px solid #d4d7db; border-top: 0; }
.panelhead.dlg { height: 12px; padding: 0 2px; gap: 7px; }
.panelhead.dlg h2 { font-weight: 700; color: #333; }
.reselect { display: flex; align-items: center; gap: 2px; height: 17px; padding-left: 8px; }
input[type="checkbox"] { appearance: none; width: 10px; height: 10px; border: 1px solid #999; background: #f2f2f2; position: relative; }
input[type="checkbox"]:checked { background: #dbe4f2; }
input[type="checkbox"]:checked::after { content: ""; position: absolute; left: 3px; top: 0; width: 3px; height: 6px; border: solid #2c4376; border-width: 0 1px 1px 0; transform: rotate(40deg); }
.dtabs { display: flex; align-items: flex-end; height: 13px; }
.dtab { height: 12px; padding: 0 2px; border: 1px solid #999; border-bottom: 0; background: #e4e4e4; }
.dtab.on { height: 13px; width: 33px; background: #fff; border-color: #c5c5c5; }
.dbody { background: #fff; border: 1px solid #c9c9c9; height: 133px; padding-top: 3px; }
.fields { display: grid; grid-template-columns: 89px 50px 82px 50px; column-gap: 5px; row-gap: 2px; align-items: center; grid-auto-rows: 14px; }
.fields label { text-align: right; white-space: nowrap; }
.fields label.off { color: #8b8b8b; }
.fields input:not([type]), .spin-wrap, .sel-wrap { width: 100%; height: 14px; }
.fields input:not([type]) { border: 1px solid #dcdcdc; padding: 0 3px; }
.sel-wrap { position: relative; display: block; }
.sel-wrap select { appearance: none; width: 100%; height: 100%; border: 1px solid #e0e0e0; background: #fff; padding: 0 3px; }
.sel-wrap::after { content: ""; position: absolute; right: 3px; top: 6px; border: 2px solid transparent; border-width: 3px 3px 0; border-top-color: #111; }
.sel-wrap select.shade { background: linear-gradient(#f1f1f1, #d4d4d4); border-color: #8f8f8f; padding: 0 1px; }
.sel-wrap select.blue { background: linear-gradient(#d9ecf8, #98c6e3); border-color: #4b87ab; padding: 0 1px; }
.spin-wrap { display: flex; }
.fields .spin-wrap input { flex: 1; min-width: 0; background: #eee; }
.spin { display: grid; width: 11px; height: 13px; border: 1px solid #ccc; background: #eee; justify-items: center; align-items: center; }
.spin i { border: 2px solid transparent; border-bottom: 2px solid #888; border-top: 0; }
.spin i + i { border-top: 2px solid #888; border-bottom: 0; }
.options { position: absolute; z-index: 2; left: 0; top: 14px; width: 123px; background: #fff; border: 1px solid #8a8a8a; box-shadow: 1px 1px 1px #0005; }
.options li { line-height: 10px; height: 10px; padding-left: 1px; white-space: nowrap; }
.options .hot { background: #3797f5; color: #fff; }
.legend { display: flex; align-items: center; gap: 1px; height: 13px; margin: 1px 3px; }
.legend::before, .legend::after { content: ""; width: 4px; height: 1px; background: #b5b5b5; }
.legend::after { flex: 1; }
.dfoot { display: flex; align-items: center; gap: 4px; height: 21px; padding: 0 2px 0 3px; background: #000; }
.dfoot svg { width: 12px; height: 12px; margin-right: auto; }
.dfoot button { width: 57px; height: 15px; color: #fff; border: 1px solid #fff; }
.dfoot .ok { background: #0a52d6; }

/* view bar */
.viewbar { display: flex; align-items: center; height: 15px; background: #f0f0f0; font-family: "Liberation Sans", sans-serif; padding-right: 1px; }
.viewbar button, .viewbar select { font-family: "Liberation Sans", sans-serif; color: #666; }
.iso { display: flex; align-items: center; gap: 1px; width: 63px; height: 15px; background: #c2cdd9; padding-left: 1px; }
.iso svg { width: 10px; height: 10px; }
.cpl { width: 10px; height: 10px; margin: 0 3px 0 5px; }
.filt { width: 9px; height: 10px; margin: 0 4px 0 6px; }
.viewbar .sel-wrap { height: 12px; }
.viewbar .sel-wrap select { padding: 0 1px; }
.top-sel.sel-wrap { width: 52px; }
.lvl-sel.sel-wrap { width: 40px; }
.viewbar .sel-wrap::after { top: 5px; border-top-color: #666; }
.viewbar .vb { width: 62px; height: 12px; margin-left: 6px; color: #222; }
.vb.raised { border: 1px solid #999; border-color: #eee #888 #888 #eee; }
.viewbar .vb.sunk { margin-left: 2px; background: #f8f8f8; border: 1px solid #eee; border-color: #888 #eee #eee #888; }
.vwin { width: 22px; height: 6px; margin-left: auto; }

/* simulation */
.sim { background: #f0f1f2; border-top: 3px solid #e3e8ee; height: 49px; }
.sim .panelhead { padding-right: 1px; gap: 5px; background: linear-gradient(#ccd5dd, #e9eff5); }
.simrow { display: flex; align-items: center; height: 17px; padding: 0 1px 0 6px; }
.simrow.two { height: 16px; }
input[type="range"] { appearance: none; flex: 1; min-width: 0; background: transparent; height: 14px; }
.timeline::-webkit-slider-runnable-track { height: 10px; background: #e5e8ea; border-top: 1px solid #bbb; border-left: 1px solid #bbb; }
.timeline::-webkit-slider-thumb { appearance: none; width: 7px; height: 12px; margin-top: -2px; background: linear-gradient(90deg, #fff, #ccc); border: 1px solid #888; border-radius: 4px 4px 1px 1px; }
.speed::-webkit-slider-runnable-track { height: 1px; background: #bfc3c6; }
.speed::-webkit-slider-thumb { appearance: none; width: 5px; height: 8px; margin-top: -4px; background: #f0f0f0; border: 1px solid #888; }
.timeline { margin-right: 6px; }
.pb { display: grid; place-items: center; width: 13px; height: 14px; margin-right: 2px; border: 1px solid #aab0b8; background: linear-gradient(#fff, #e3e5e8); }
.pb.wide { width: 15px; margin-left: 1px; }
.pb.gap { margin: 0 0 0 2px; }
.pb svg { width: 7px; height: 7px; fill: #14147a; }
.const { display: flex; align-items: center; justify-content: center; gap: 1px; width: 48px; height: 14px; margin: 0 10px 0 1px; border: 1px solid #8f8f8f; background: linear-gradient(#f4f4f4, #d6d6d6); font-family: "Liberation Sans", sans-serif; }
.const svg { width: 7px; height: 7px; }
.speed { margin-right: 3px; }
.step { width: 17px; height: 13px; border: 0; background: #f8f8f8; padding-left: 2px; }
.plabel { width: 94px; font-family: "Liberation Sans", sans-serif; }

/* status bar */
.status { display: flex; align-items: center; height: 12px; padding: 0 1px 0 2px; background: linear-gradient(#c9ced3, #d5d9dd); border-top: 1px solid #b2bac2; color: #555; }
.msg { flex: 1; }
.fl { padding: 0 1px; color: #a2a7ac; border-left: 1px solid #b5babf; }
.dk, .nb { color: #444; }
.nb { padding: 0 1px; }
```
